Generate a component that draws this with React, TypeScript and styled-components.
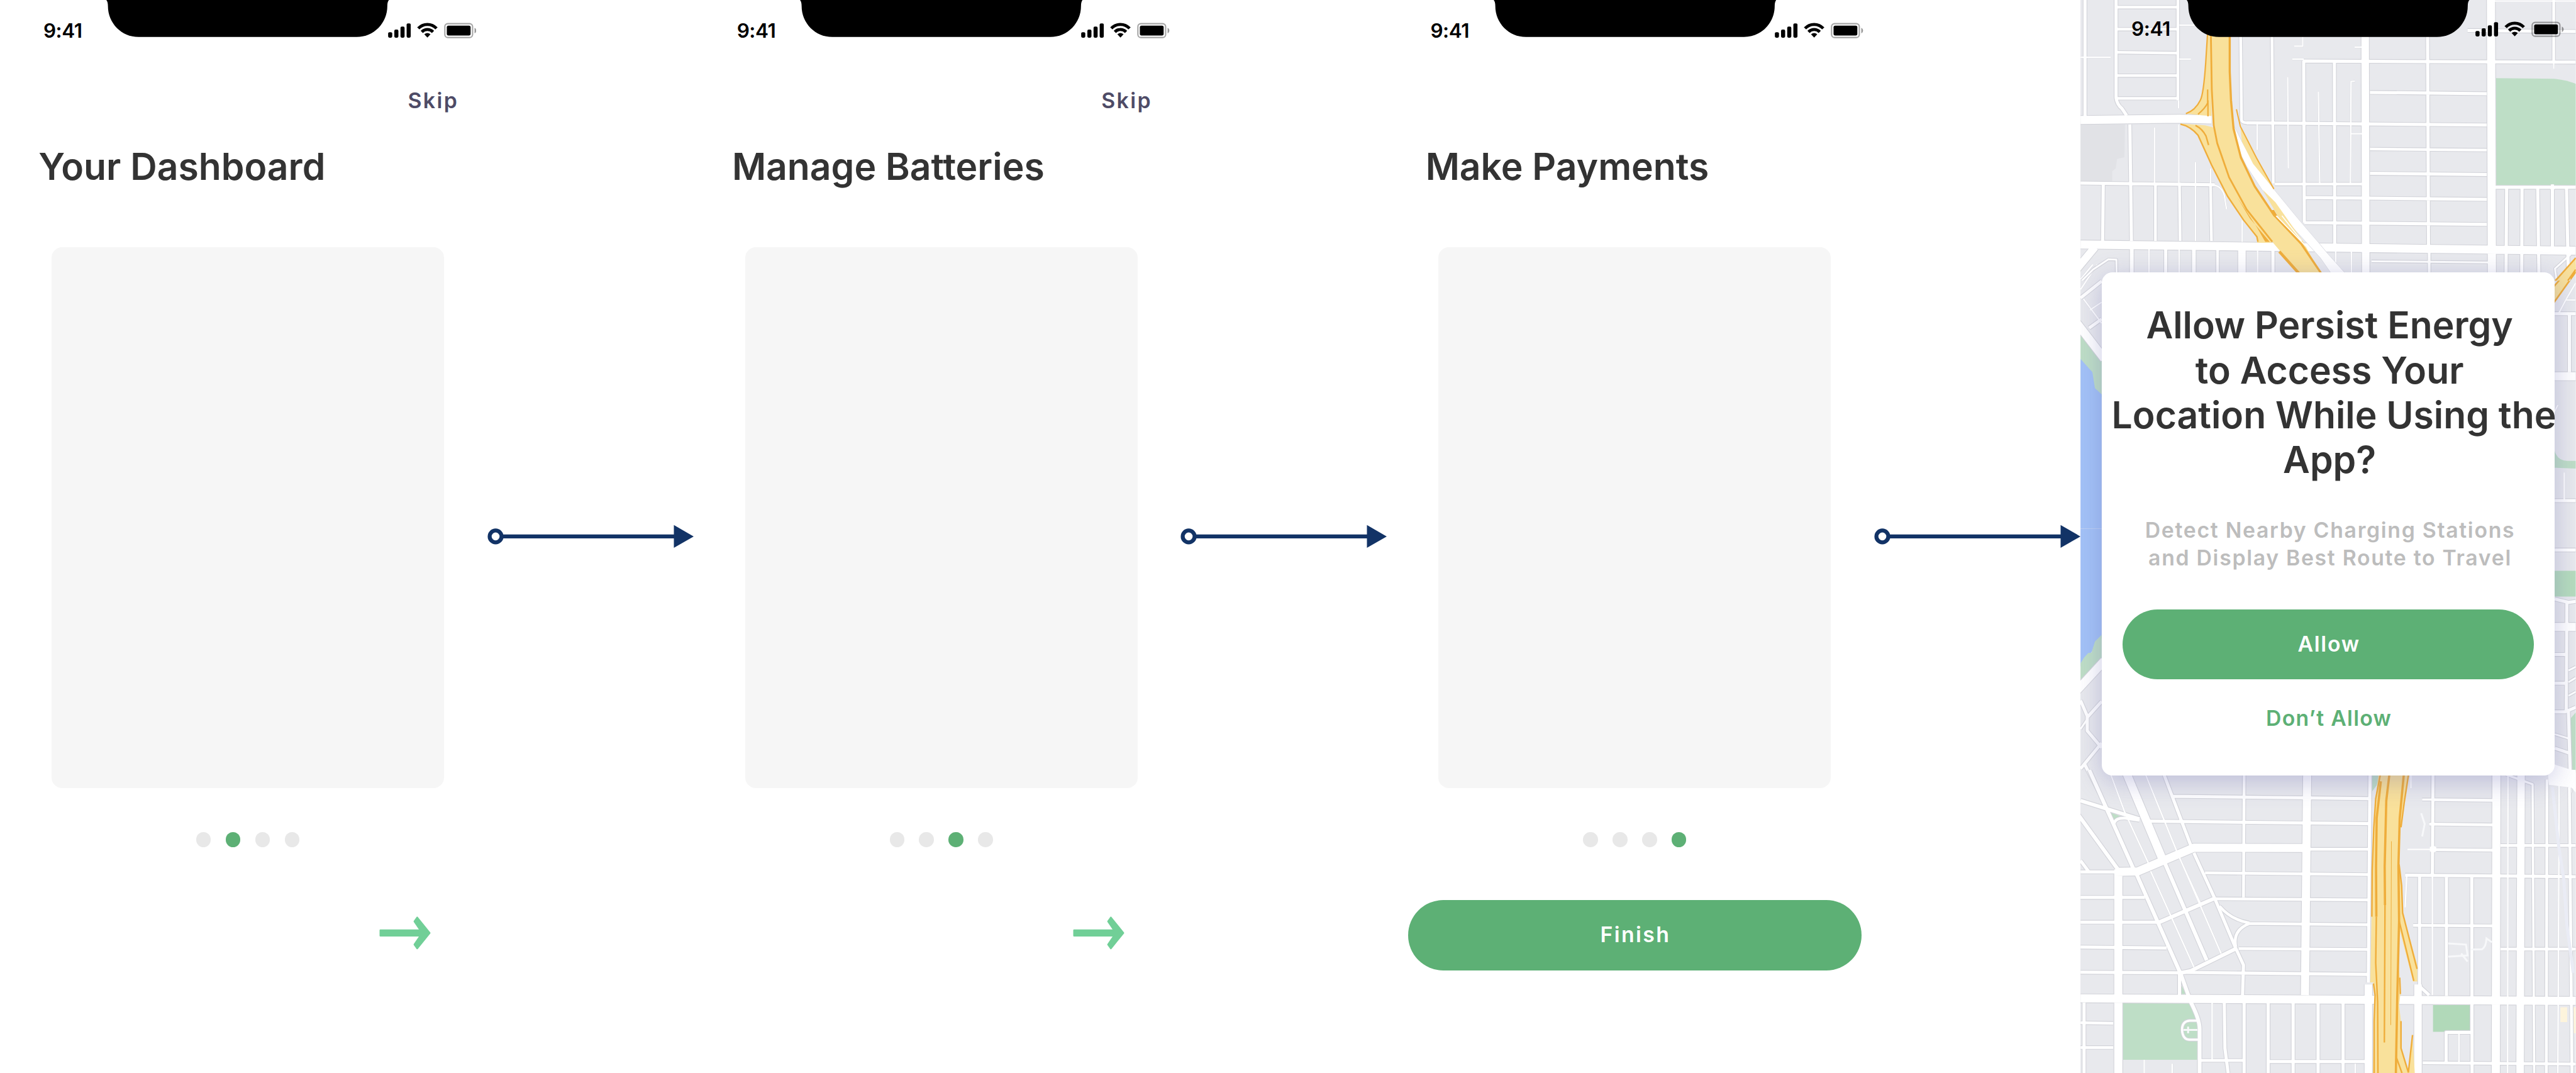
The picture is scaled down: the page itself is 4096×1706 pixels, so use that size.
import React from "react";
import styled, { createGlobalStyle, css } from "styled-components";

/* One design unit, scaled so that the 1950-unit wide board fills the window. */
const u = (n: number) => `${+(n * 2.10051).toFixed(3)}px`;

const colors = {
  green: "#5db075",
  mint: "#71cf97",
  ink: "#333333",
  plum: "#4e4b66",
  navy: "#123366",
  mute: "#bdbdbd",
  panel: "#f6f6f6",
  dot: "#e8e8e8",
};

const label = css`
  font-family: Inter, "Liberation Sans", sans-serif;
  font-weight: 600;
  font-size: ${u(16.1)};
  line-height: ${u(21)};
`;

const GlobalStyle = createGlobalStyle`
  *, *::before, *::after { box-sizing: border-box; }
  html, body { margin: 0; padding: 0; background: #fff; }
  body { overflow: hidden; }
  button { border: 0; padding: 0; background: none; cursor: pointer; }
`;

const Board = styled.main`
  display: flex;
  width: 4096px;
  height: 1706px;
  overflow: hidden;
  background: #fff;
`;

const Phone = styled.section`
  position: relative;
  flex: none;
  display: flex;
  flex-direction: column;
  width: ${u(375)};
  height: 100%;
`;

/* ---------- status bar ---------- */

const Bar = styled.header<{ $shifted?: boolean }>`
  position: relative;
  flex: none;
  display: flex;
  justify-content: space-between;
  align-items: flex-start;
  height: ${u(44)};
  padding: ${({ $shifted }) =>
    $shifted ? `${u(16.2)} ${u(9)} 0 ${u(38.5)}` : `${u(17.2)} ${u(14.5)} 0 ${u(32.8)}`};
`;

const Clock = styled.time`
  position: relative;
  margin-top: ${u(-2.2)};
  font: 600 ${u(15)} / ${u(16)} Inter, sans-serif;
  letter-spacing: ${u(-0.2)};
  color: #000;
`;

const NotchShape = styled.svg`
  position: absolute;
  left: ${u(80.5)};
  top: 0;
  width: ${u(214)};
  height: ${u(28)};
`;

const Indicators = styled.svg`
  position: relative;
  width: ${u(67)};
  height: ${u(12)};
`;

function StatusBar({ shifted }: { shifted?: boolean }) {
  return (
    <Bar $shifted={shifted}>
      <NotchShape viewBox="0 0 856 112" preserveAspectRatio="none">
        <path d="M0 0C3 3 5 9 5 18C5 70 46 112 98 112H758C810 112 851 70 851 18C851 9 853 3 856 0Z" />
      </NotchShape>
      <Clock>9:41</Clock>
      <Indicators viewBox="0 0 268 48">
        <rect x="0.3" y="29" width="12.4" height="16.6" rx="4" />
        <rect x="19" y="21" width="12.4" height="24.6" rx="4" />
        <rect x="37.7" y="12" width="12.4" height="33.6" rx="4" />
        <rect x="56.3" y="2.3" width="12.4" height="43.3" rx="4" />
        <g fill="none" stroke="#000" strokeWidth="9.2">
          <path d="M91.6 17.4A37.6 37.6 0 0 1 146.8 17.4" />
          <path d="M102.2 28A23.6 23.6 0 0 1 136.2 28" />
        </g>
        <path d="M109.8 35.2Q119.2 27.6 128.6 35.2L119.2 45.4Z" />
        <rect x="172" y="3" width="84" height="42" rx="9" fill="none" stroke="#000" strokeOpacity=".35" strokeWidth="4" />
        <rect x="178" y="9" width="72" height="30" rx="5" />
        <path d="M262 15.8C269 18 269 30 262 32.2Z" fillOpacity=".4" />
      </Indicators>
    </Bar>
  );
}

/* ---------- onboarding screens ---------- */

const SkipRow = styled.div`
  display: flex;
  justify-content: flex-end;
  height: ${u(54)};
  padding: ${u(21.6)} ${u(27.8)} 0 0;
`;

const Skip = styled.button`
  ${label}
  height: ${u(21)};
  color: ${colors.plum};
  letter-spacing: ${u(1.15)};
`;

const Title = styled.h1`
  margin: ${u(10.8)} 0 0 ${u(29.1)};
  font: 600 ${u(28)} / ${u(34)} Inter, sans-serif;
  color: ${colors.ink};
  white-space: nowrap;
`;

const Preview = styled.div`
  flex: none;
  width: ${u(297)};
  height: ${u(409)};
  margin: ${u(44.5)} 0 0 ${u(39)};
  border-radius: ${u(8)};
  background: ${colors.panel};
`;

const Dots = styled.nav`
  display: flex;
  justify-content: center;
  gap: ${u(11.2)};
  margin-top: ${u(33.7)};
`;

const Dot = styled.span<{ $active: boolean }>`
  width: ${u(11.15)};
  height: ${u(11.15)};
  border-radius: 50%;
  background: ${({ $active }) => ($active ? colors.green : colors.dot)};
`;

const NextButton = styled.button`
  align-self: flex-end;
  width: ${u(39)};
  height: ${u(26)};
  margin: ${u(51.9)} ${u(49)} 0 0;
  svg { display: block; width: 100%; height: 100%; }
`;

const Pill = styled.button<{ $wide?: boolean }>`
  ${label}
  display: flex;
  flex: none;
  align-items: center;
  justify-content: center;
  width: ${({ $wide }) => u($wide ? 343 : 311)};
  height: ${u(53.3)};
  padding: 0 0 ${u(0.9)} ${u(1)};
  border-radius: ${u(27)};
  background: ${colors.green};
  color: #fff;
  letter-spacing: ${({ $wide }) => u($wide ? 1.15 : 0.8)};
`;

const FinishSlot = styled.div`
  display: flex;
  justify-content: center;
  margin-top: ${u(40.2)};
`;

function ArrowIcon() {
  return (
    <svg viewBox="0 0 156 104">
      <path
        d="M3.5 43.7H124.7L106.5 17L115 5.2L152.7 52L115 98.8L106.5 87L124.7 60.3H3.5Z"
        fill={colors.mint}
        stroke={colors.mint}
        strokeWidth="5"
        strokeLinejoin="round"
      />
    </svg>
  );
}

interface StepProps {
  title: string;
  step: number;
  last?: boolean;
}

function OnboardingStep({ title, step, last }: StepProps) {
  return (
    <Phone>
      <StatusBar />
      <SkipRow>{!last && <Skip>Skip</Skip>}</SkipRow>
      <Title>{title}</Title>
      <Preview />
      <Dots>
        {[0, 1, 2, 3].map((i) => (
          <Dot key={i} $active={i === step} />
        ))}
      </Dots>
      {last ? (
        <FinishSlot>
          <Pill $wide>Finish</Pill>
        </FinishSlot>
      ) : (
        <NextButton aria-label="Next">
          <ArrowIcon />
        </NextButton>
      )}
    </Phone>
  );
}

/* ---------- flow connector ---------- */

const Link = styled.svg`
  position: relative;
  z-index: 2;
  flex: none;
  align-self: center;
  width: ${u(150)};
  height: ${u(18)};
  overflow: visible;
`;

function Connector() {
  return (
    <Link viewBox="0 0 600 72">
      <path d="M18 36H545" stroke={colors.navy} strokeWidth="12" />
      <circle cx="0" cy="36" r="18" fill="#fff" stroke={colors.navy} strokeWidth="12" />
      <path d="M540 1.3L600 36L540 70.7Z" fill={colors.navy} />
    </Link>
  );
}

/* ---------- street map ---------- */

const MapCanvas = styled.svg`
  position: absolute;
  inset: 0;
  width: 100%;
  height: 100%;
  path { vector-effect: non-scaling-stroke; }
`;

type Road = [number, string];

const land = "#e8e9ed";
const park = "#bedec6";
const lane = "#f9e19b";
const edge = "#efad3b";

const northRoads: Road[] = [
  [2.2, "M330 140H390M21 320H115M330 330H366M715 190V258H688M668 430L670 940M764 512L768 1022M878 453L866 455L864 1022M877 263H900M682 330H718M1300 6H1568M866 747H900M327 560V605M573 695V838M252 712V1030M328 695V1020M380 905V1345M427 940V1030M526 1230V1350M435 1032Q462 1040 470 1090L477 1168M235 1390V1568M329 1390V1568M574 1400V1568M867 1405V1568M818 1400V1568M1499 340V385"],
  [3, "M25 1568L60 1505L108 1448L133 1450L134 1568M930 1459L1296 1465M1552 1420L1503 1500L1508 1568"],
  [4.3, "M132 40H325M135 163H325M135 292L322 296M135 422H325M135 549H325M325 0V560M521 190L524 670Q524 686 545 686M925 832L1290 838M628 1028H900M619 190L623 1025M449 1390V1568M1110 1410V1568M1499 0V340M427 1030L430 1345M255 1030V1345M330 1020L332 1345"],
  [5, "M35 0V655M132 0V545Q135 585 150 605L165 645M718 340L720 1243M814 345L815 1390M1105 190L1108 1390M1230 170L1568 176M715 341L1568 347M925 516L1290 523M540 686L900 692L1290 698M925 968L1290 975M21 1022L440 1032M720 1103L1290 1113M720 1243L1290 1253M1315 1046H1568M175 695L180 1345M92 1030L90 1345M287 1390V1568M622 1400V1568M1352 1050L1350 1568M1400 1050L1399 1568M1449 1050L1453 1568M1495 1030V1390M1539 1050L1545 1568"],
  [6, "M181 1390V1568M375 1390V1568"],
  [12, "M910 190L912 1568M525 1390V1568M66 1380L8 1505"],
  [13, "M1303 0L1306 1568M21 670L330 663L430 667M21 1365L1568 1400"],
];

const upperRoads: Road[] = [
  [2.4, "M30 205L87 350M50 272L87 225M21 150L87 -40M1510 0L1505 60M1515 290L1540 200L1568 110M1535 212H1568M1500 880L1512 835M1532 1235V1395M21 90L60 0"],
  [5, "M21 200L87 100M48 378L87 325M1502 293H1568M1548 300V640M1502 1402H1568"],
  [13, "M10 350L95 560M1502 664H1568"],
];

const lowerRoads: Road[] = [
  [3, "M21 1190L42 1130M1545 842L1568 820M1545 912L1568 885M1545 992L1568 968M1502 1220L1545 1245"],
  [5, "M21 1020L42 1112L42 1200L87 1300M42 1120L87 1025M87 1272L21 1425M33 1395L80 1568M1502 127H1568M1502 418L1545 438L1568 432M1540 438L1538 1090M1502 747H1538M1502 917H1538M1568 1060L1535 1087H1502M1545 1085L1552 1568M1502 1303L1552 1335"],
  [13, "M10 960L95 785M1502 583H1568"],
];

const southRoads: Road[] = [
  [2.4, "M110 0L158 215L235 490M218 0L320 415L460 950M240 525L375 1020M330 455L395 690M1356 30L1355 1568M1516 80L1512 1568M1040 545L1035 712M1042 412H1120M220 1500V1568M307 1520V1568M432 1205V1500M879 1520V1568M1203 1365V1510M1120 550V1165M1053 30V95"],
  [3.5, "M1088 154H1125M1350 25L1433 75L1438 1568M388 1297H362Q338 1300 338 1345Q340 1396 362 1396H388"],
  [4.5, "M532 20L530 660M735 411H920M410 533L920 542M440 667L920 673M545 795L920 801M515 925L920 929M1125 155L1308 158M1110 281L1308 285M1120 413L1308 416M1333 392H1568M1333 927H1568M1060 805L1308 807M1090 1515L1568 1522M21 1308L123 1311M21 1436H123M395 1503H530M1478 50L1476 1568M1548 90L1556 1568M455 705Q490 775 548 792M548 795Q495 830 506 915M125 290Q125 248 160 250L205 262"],
  [5, "M305 137L920 149M230 266L920 279M345 1048L920 1058M925 20L920 1100M1122 20L1120 545M21 528H135M139 660H222M21 660H130M21 788H265M21 917L290 922M21 1047L335 1050M276 0L365 390M375 430L440 665L505 920L530 1010L527 1165M21 470L48 530M1080 545V1120L1110 1165M1164 550V1170M1243 550L1244 1568M1035 545L1568 553M32 1205V1568M330 1050V1165M470 1205L472 1440L482 1568M532 1205V1568M607 1205V1568M685 1205V1568M763 1205V1568M841 1205V1568M610 1509H910M1163 1515V1358H1243"],
  [6, "M48 0L187 515M285 485L415 985M196 540L335 1060L365 1200Q393 1290 393 1340V1568M15 235L140 520M21 160L205 255M262 792L440 665M335 1050L365 1040L510 922"],
  [12, "M1397 30L1394 1568M920 1110V1568M1075 1110V1568"],
  [13, "M160 0L275 455M729 20L722 1165M1320 20L1318 1568M139 515V1568M130 528L200 526L375 403L715 405M21 1182L1568 1195"],
];

function Roads({ list }: { list: Road[] }) {
  return (
    <g fill="none" strokeLinejoin="round">
      {list.map(([w, d], i) => (
        <path key={`c${i}`} d={d} stroke="#d2d3d9" strokeWidth={w > 2.5 ? w + 2.2 : w + 0.6} />
      ))}
      {list.map(([w, d], i) => (
        <path key={`r${i}`} d={d} stroke="#fff" strokeWidth={w} />
      ))}
    </g>
  );
}

interface TileProps {
  y: number;
  height: number;
  children: React.ReactNode;
}

function Tile({ y, height, children }: TileProps) {
  return (
    <svg x="-20" y={y} width="1520" height={height} viewBox="0 0 1568 1568" preserveAspectRatio="none">
      {children}
    </svg>
  );
}

function StreetMap() {
  return (
    <MapCanvas viewBox="0 0 1500 3248" preserveAspectRatio="none">
      <rect width="1500" height="3248" fill={land} />

      <Tile y={800} height={800}>
        <path d="M21 415L87 575V790H21Z" fill={park} />
        <path d="M21 562L40 602L58 640L66 735L87 772V1568H21Z" fill="#a3c2f7" />
        <path d="M1500 1095Q1508 1165 1540 1166H1568V1212L1500 1207Z" fill={park} />
        <Roads list={upperRoads} />
        <path d="M1500 130L1560 0H1568V45L1500 225Z" fill={lane} />
        <path d="M1500 130L1560 0M1500 226L1568 45" fill="none" stroke={edge} strokeWidth="2.6" />
      </Tile>

      <Tile y={1600} height={800}>
        <path d="M21 -10H87V650L21 820Z" fill="#a3c2f7" />
        <path d="M21 800L32 765L45 738L55 736L66 670L87 630V770L21 895Z" fill={park} />
        <path d="M1500 250H1568V403H1500Z" fill="#b5dcbd" />
        <path d="M1550 1130L1568 1090V1450H1558Z" fill={park} />
        <Roads list={lowerRoads} />
        <path d="M1502 1400L1568 1440V1568L1545 1510H1490L1484 1470Z" fill="#fff" />
      </Tile>

      <Tile y={0} height={850}>
        <path d="M21 695H160L158 878L135 888L131 940L120 955V1015H21Z" fill="#e1e2e6" />
        <path d="M1317 436L1500 440Q1535 446 1568 468V1033H1319Z" fill={park} />
        <Roads list={northRoads} />
        <path d="M1490 1040L1495 1028L1502 1040V1056H1488Z" fill="#fff" />
        <path d="M418 180L412 350Q405 530 395 560Q380 615 350 635L388 642L430 648V180Z" fill={lane} />
        <path d="M418 180L412 350Q405 530 395 560Q380 615 350 635M418 500V575Q410 605 388 638M419 560V650" fill="none" stroke={edge} strokeWidth="2.2" />
        <path d="M333 690L410 700L436 712L500 1000L618 1356H573L572 1322L530 1228L480 1095L430 920L388 755L362 708Z" fill={lane} />
        <path d="M575 1350L572 1322L530 1228L480 1095L430 920L388 755Q365 705 333 693M380 700Q402 720 413 760L421 810" fill="none" stroke={edge} strokeWidth="2.4" />
        <path d="M500 700L525 790L560 905L622 1050L700 1220L768 1362L790 1410L850 1530H805L770 1440L722 1345L650 1205L590 1065L540 930L518 850Z" fill="#fff" stroke="#dcdde3" strokeWidth="1" />
        <path d="M520 705L570 880L625 1055L560 915L525 790Z" fill={lane} />
        <path d="M508 610L520 705L570 880L625 1055" fill="none" stroke={edge} strokeWidth="2" />
        <path d="M590 1060L630 1130L715 1345L770 1525L700 1400Z" fill={lane} />
        <path d="M430 180V500L436 700L448 800L485 990L540 1170L620 1350L705 1530H777L710 1360L625 1200L565 1040L522 880L500 720L490 560L487 180Z" fill={lane} />
        <path d="M428 180L431 500L437 700L448 800L485 990L540 1170L620 1350" fill="none" stroke={edge} strokeWidth="2.8" />
        <path d="M642 1405L705 1530" fill="none" stroke={edge} strokeWidth="4.5" />
        <path d="M487 180V400L491 560L499 720L522 880L565 1040L625 1200L710 1360L774 1530" fill="none" stroke={edge} strokeWidth="3.4" />
        <path d="M510 1100L550 1220L612 1350H598L572 1270Z" fill={edge} />
        <path d="M612 1175L625 1172L636 1205L626 1212Z" fill={edge} />
        <path d="M632 1205L725 1375M650 1205L712 1345" fill="none" stroke="#fff" strokeWidth="1.6" />
        <path d="M1568 1440L1500 1568H1545L1568 1500Z" fill={lane} />
        <path d="M1568 1440L1504 1568M1568 1505L1543 1568" fill="none" stroke={edge} strokeWidth="2.6" />
      </Tile>

      <Tile y={2330} height={918}>
        <path d="M115 222L146 240L125 260Z" fill={park} />
        <path d="M152 1207H370L388 1290V1500H152Z" fill={park} />
        <path d="M335 1110L350 1160H335Z" fill={park} />
        <path d="M1122 1217H1240V1355H1122Z" fill="#b1d9b9" />
        <path d="M1520 1228H1541V1305H1520ZM1558 1228H1568V1362H1558Z" fill="#fdf4dc" />
        <path d="M932 20H958L946 80L932 112Z" fill={park} />
        <Roads list={southRoads} />
        <path d="M1112 400L1122 392L1132 400V422L1122 430L1112 422Z" fill="#fff" />
        <path d="M1480 0H1568V98L1545 90L1484 78Z" fill="#fff" />
        <path d="M1495 90L1515 400L1530 560L1540 800L1560 1050" fill="none" stroke="#eaecf5" strokeWidth="5" />
        <path d="M1085 225L1096 280L1088 345M1170 898L1225 904L1230 960L1170 966M1210 950L1230 992M1240 930L1275 928Q1288 915 1289 872L1306 892M342 1345H386M357 1328V1362" fill="none" stroke="#f7f8fa" strokeWidth="3" />
        <path d="M952 20L942 150L937 300L932 520L930 750L926 1100H936L942 1165L938 1300L934 1568H1065L1058 1370L1045 1560L1024 1440L1022 1300L1016 1220L1020 1160L1019 1090L1012 960L1018 830L1060 1095H1073V1010L1027 740L1022 600L1016 490L1020 300L1030 180L1048 20Z" fill={lane} />
        <g fill="none" stroke={edge}>
          <path strokeWidth="2.4" d="M958 20L943 150L937 300L932 520L931 760M936 1105L941 1165L938 1300V1568M1046 20L1032 170L1022 298M1016 490L1024 600L1027 740L1072 1030M1016 780L1062 1092M1018 1075L1020 1160M1022 1300V1440L1045 1565L1058 1372" />
          <path strokeWidth="3.6" d="M986 20L976 160L971 500L972 700M959 60L946 250L944 500L945 760M1031 20L1018 250L1014 500L1016 780L1010 1200L1006 1568" />
          <path strokeWidth="2.4" d="M945 760L943 1000L949 1200L950 1568M972 700L970 1410M1008 1490L1025 1568" />
          <path strokeWidth="1" d="M992 370L990 1320" />
        </g>
      </Tile>
    </MapCanvas>
  );
}

/* ---------- location permission ---------- */

const MapPhone = styled(Phone)`
  overflow: hidden;
`;

const Dialog = styled.div`
  position: relative;
  flex: none;
  display: flex;
  flex-direction: column;
  align-items: center;
  width: ${u(343)};
  height: ${u(381)};
  margin: ${u(162)} 0 0 ${u(16)};
  padding-top: ${u(23.1)};
  border-radius: ${u(8)};
  background: #fff;
  box-shadow: 0 ${u(4)} ${u(20)} rgba(90, 90, 170, 0.32);
`;

const Question = styled.h2`
  width: ${u(330)};
  margin: 0 0 0 ${u(2)};
  font: 600 ${u(28)} / ${u(34)} Inter, sans-serif;
  color: ${colors.ink};
  text-align: center;
  white-space: nowrap;
`;

const Reason = styled.p`
  ${label}
  margin: ${u(25.7)} 0 ${u(28.3)} ${u(2.8)};
  color: ${colors.mute};
  letter-spacing: ${u(0.8)};
  text-align: center;
  white-space: nowrap;
`;

const Decline = styled.button`
  ${label}
  margin: ${u(18.8)} 0 0 ${u(1)};
  color: ${colors.green};
  letter-spacing: ${u(0.6)};
`;

function LocationPrompt() {
  return (
    <MapPhone>
      <StreetMap />
      <StatusBar shifted />
      <Dialog role="dialog">
        <Question>
          Allow Persist Energy
          <br />
          to Access Your
          <br />
          Location While Using the
          <br />
          App?
        </Question>
        <Reason>
          Detect Nearby Charging Stations
          <br />
          and Display Best Route to Travel
        </Reason>
        <Pill>Allow</Pill>
        <Decline>Don’t Allow</Decline>
      </Dialog>
    </MapPhone>
  );
}

export default function App() {
  return (
    <>
      <GlobalStyle />
      <Board>
        <OnboardingStep title="Your Dashboard" step={1} />
        <Connector />
        <OnboardingStep title="Manage Batteries" step={2} />
        <Connector />
        <OnboardingStep title="Make Payments" step={3} last />
        <Connector />
        <LocationPrompt />
      </Board>
    </>
  );
}
